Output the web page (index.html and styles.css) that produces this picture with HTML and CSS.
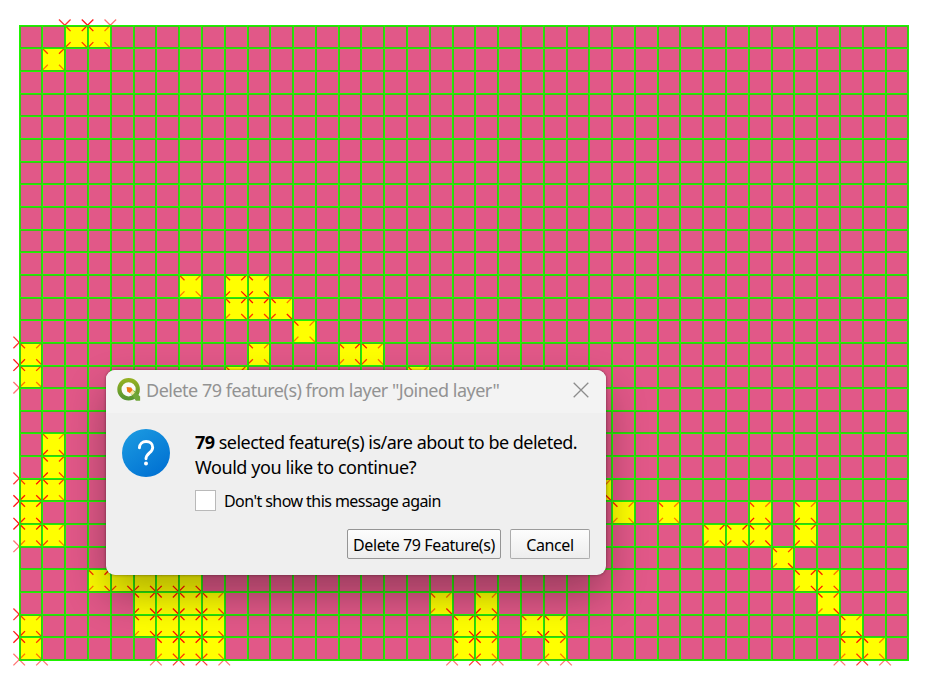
FILE: index.html
```html
<!DOCTYPE html>
<html lang="en">
<head>
<meta charset="utf-8">
<title>Delete features</title>
<link rel="stylesheet" href="styles.css">
</head>
<body>
<main class="canvas">
  <svg class="map" id="map" width="930" height="690" viewBox="0 0 930 690" aria-hidden="true"></svg>
  <section class="dialog" role="dialog">
    <header class="titlebar">
      <svg class="logo" width="24" height="24" viewBox="0 0 24 24">
        <defs><linearGradient id="lg" x1="0" y1="0" x2="0" y2="1"><stop offset="0" stop-color="#93b023"/><stop offset="1" stop-color="#589632"/></linearGradient></defs>
        <circle cx="11.6" cy="11.3" r="9.2" fill="#fafafa" stroke="url(#lg)" stroke-width="4.2"/>
        <path d="M13.200 14.500l3.600-2.200 6.300 6.200v4.300h-4.200z" fill="#6fa63a"/>
        <path d="M12.4 12.4l3.3-.2 2.200 2.400-2.300 2.300-3.200-2.100z" fill="#f3e9a5"/>
        <path d="M9.6 9.1l4.6.5 1.6 2.5-3.1 3-2.5-1.700z" fill="#ee7913"/>
      </svg>
      <h1 class="title">Delete 79 feature(s) from layer "Joined layer"</h1>
      <svg class="close" width="16" height="16" viewBox="0 0 16 16"><path d="M.7.7l14.6 14.6M15.3.7L.7 15.3"/></svg>
    </header>
    <div class="content">
      <svg class="question" width="48" height="48" viewBox="0 0 48 48">
        <defs><linearGradient id="bg" x1="0.1" y1="0" x2="0.8" y2="1"><stop offset="0" stop-color="#1c9be1"/><stop offset="1" stop-color="#0070d2"/></linearGradient></defs>
        <circle cx="24" cy="24" r="24" fill="url(#bg)"/>
        <path d="M17.4 18.9c.1-4 3-6.4 6.7-6.4 3.900 0 6.600 2.300 6.600 5.900 0 5.200-6.700 5.900-6.700 11.400" fill="none" stroke="#fff" stroke-width="2.9" stroke-linecap="round"/>
        <circle cx="24" cy="34.500" r="2" fill="#fff"/>
      </svg>
      <div class="body">
        <p class="message"><span class="line1"><b>79</b> selected feature(s) is/are about to be deleted.</span><br><span class="line2">Would you like to continue?</span></p>
        <label class="option"><span class="box"></span><span class="label">Don't show this message again</span></label>
      </div>
    </div>
    <footer class="buttons">
      <button class="btn primary"><span class="btntext">Delete 79 Feature(s)</span></button>
      <button class="btn cancel"><span class="btntext">Cancel</span></button>
    </footer>
  </section>
</main>
<script src="map.js"></script>
</body>
</html>
```
FILE: map.js
```js
const COLS = 39, ROWS = 28;
const X0 = 19.7, Y0 = 25.7, DX = 22.785, DY = 22.654;
// Selected grid cells, listed per row
const selected = {
  0: [2, 3], 1: [1],
  11: [7, 9, 10], 12: [9, 10, 11], 13: [12],
  14: [0, 10, 14, 15], 15: [0, 9, 17],
  18: [1], 19: [1], 20: [0, 1, 25],
  21: [0, 26, 28, 32, 34], 22: [0, 1, 30, 31, 32, 34], 23: [33],
  24: [3, 4, 5, 6, 7, 34, 35], 25: [5, 6, 7, 8, 18, 20, 35],
  26: [0, 5, 6, 7, 8, 19, 20, 22, 23, 36],
  27: [0, 6, 7, 8, 19, 20, 23, 36, 37]
};
const has = (c, r) => (selected[r] || []).includes(c);
const outside = (c, r) => c < 0 || r < 0 || c >= COLS || r >= ROWS;
const px = c => Math.floor(X0 + c * DX);
const py = r => Math.floor(Y0 + r * DY);
const rect = (x, y, w, h, cls) => `<rect class="${cls}" x="${x}" y="${y}" width="${w}" height="${h}"/>`;
const W = px(COLS) - px(0), H = py(ROWS) - py(0);

let out = rect(px(0), py(0), W, H, 'ground');
for (const r in selected) for (const c of selected[r]) {
  out += rect(px(c), py(+r), px(c + 1) - px(c), py(+r + 1) - py(+r), 'picked');
}
// Vertex markers: overlapping vertices accumulate; a ring closes on its first corner
for (let r = 0; r <= ROWS; r++) for (let c = 0; c <= COLS; c++) {
  const n = 2 * has(c, r) + has(c - 1, r) + has(c, r - 1) + has(c - 1, r - 1);
  if (!n) continue;
  const x = X0 + c * DX - 0.5, y = Y0 + r * DY - 0.4;
  for (const [sx, sy] of [[1, 1], [-1, 1], [1, -1], [-1, -1]]) {
    const qc = sx > 0 ? c : c - 1, qr = sy > 0 ? r : r - 1;
    if (has(qc, qr) || outside(qc, qr)) {
      out += `<path class="mark" opacity="${1 - 0.45 ** n}" d="M${x} ${y}l${sx * 5.8} ${sy * 5.8}"/>`;
    }
  }
}
// Each grid line is a bright pixel with a darker one beside it
for (let c = 0; c <= COLS; c++) {
  const side = c === 0 || (X0 + c * DX) % 1 >= 0.5 ? 1 : -1;
  out += rect(px(c) + side, py(0), 1, H + 1, 'shade');
}
for (let r = 0; r <= ROWS; r++) {
  const side = (Y0 + r * DY) % 1 >= 0.5 ? 1 : -1;
  out += rect(px(0), py(r) + side, W + 1, 1, 'shade');
}
for (let c = 0; c <= COLS; c++) out += rect(px(c), py(0), 1, H + 1, 'wire');
for (let r = 0; r <= ROWS; r++) out += rect(px(0), py(r), W + 1, 1, 'wire');
document.getElementById('map').innerHTML = out;
```
FILE: styles.css
```css
* { box-sizing: border-box; }
body { margin: 0; background: #fff; font-family: "Noto Sans", "Open Sans", sans-serif; color: #000; }
.canvas { position: relative; width: 930px; height: 690px; overflow: hidden; }
.map { display: block; }
.ground { fill: #e15888; }
.picked { fill: #ff0; }
.shade { fill: #38c414; }
.wire { fill: #1ef500; }
.mark { stroke: #f00; stroke-width: 1.3; fill: none; }
.dialog {
  position: absolute; left: 106px; top: 370px; width: 500px; height: 205px;
  border-radius: 9px; background: #efefef; overflow: visible;
  box-shadow: 0 0 3px rgba(0,0,0,.45), 0 20px 40px rgba(0,0,0,.32);
}
.titlebar { display: flex; align-items: center; height: 43px; padding: 0 17px 3px 11px; background: #f3f3f3; border-radius: 9px 9px 0 0; }
.title { flex: 1; margin: 0 0 0 5px; font-size: 18px; font-weight: 400; line-height: 24px; color: #929292; white-space: nowrap; letter-spacing: -.5px; }
.close { stroke: #8c8c8c; stroke-width: 1.3; fill: none; }
.content { display: flex; padding: 16px 16px 0; }
.body { margin-left: 25px; }
.message { margin: 1px 0 0; font-size: 18px; line-height: 25px; white-space: nowrap; }
.line1 { letter-spacing: -.52px; }
.line2 { letter-spacing: -.42px; }
.option { display: flex; align-items: center; gap: 8px; margin-top: 10px; height: 21px; font-size: 16px; white-space: nowrap; letter-spacing: -.56px; }
.box { width: 21px; height: 21px; background: #fff; border: 1px solid #b9b9b9; }
.buttons { display: flex; justify-content: flex-end; gap: 9px; padding: 18px 16px 0; }
.btn { height: 30px; padding: 1px 0 0; border: 1px solid #adadad; border-top-color: #9b9b9b; border-radius: 2px; background: linear-gradient(#fdfdfd, #ededed); font: 16px "Noto Sans", sans-serif; letter-spacing: -.4px; white-space: nowrap; color: #000; }
.primary { width: 154px; border-color: #959595; }
.cancel { width: 80px; }
```
